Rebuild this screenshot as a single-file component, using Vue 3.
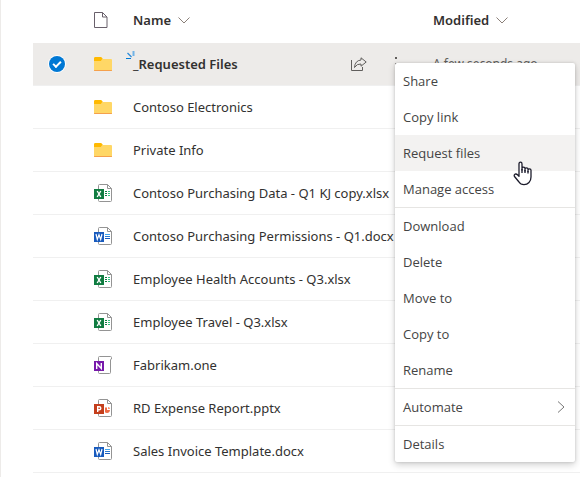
<script setup>
import { ref } from 'vue'

const files = ref([
  { name: '_Requested Files', type: 'folder', selected: true, isNew: true, modified: 'A few seconds ago' },
  { name: 'Contoso Electronics', type: 'folder' },
  { name: 'Private Info', type: 'folder' },
  { name: 'Contoso Purchasing Data - Q1 KJ copy.xlsx', type: 'excel' },
  { name: 'Contoso Purchasing Permissions - Q1.docx', type: 'word' },
  { name: 'Employee Health Accounts - Q3.xlsx', type: 'excel' },
  { name: 'Employee Travel - Q3.xlsx', type: 'excel' },
  { name: 'Fabrikam.one', type: 'onenote' },
  { name: 'RD Expense Report.pptx', type: 'powerpoint' },
  { name: 'Sales Invoice Template.docx', type: 'word' }
])

const menuGroups = [
  ['Share', 'Copy link', 'Request files', 'Manage access'],
  ['Download', 'Delete', 'Move to', 'Copy to', 'Rename'],
  ['Automate'],
  ['Details']
]
const highlighted = ref('Request files')
</script>

<template>
  <main class="library">
    <table class="files">
      <colgroup>
        <col class="col-check" />
        <col class="col-icon" />
        <col class="col-name" />
        <col />
      </colgroup>
      <thead>
        <tr>
          <th></th>
          <th class="icon-cell">
            <svg class="doc" width="14" height="16" viewBox="0 0 14 16">
              <path d="M.5.5h8l4.500 4.500v10.500H.5z" fill="#fff" stroke="#69606b" />
              <path d="M8.500.5v4.500h4.500" fill="none" stroke="#69606b" />
            </svg>
          </th>
          <th>
            <button class="sort" type="button">Name
              <svg width="12" height="7" viewBox="0 0 12 7"><path d="M.5.5 6 6 11.500.5" /></svg>
            </button>
          </th>
          <th>
            <button class="sort" type="button">Modified
              <svg width="12" height="7" viewBox="0 0 12 7"><path d="M.5.5 6 6 11.500.5" /></svg>
            </button>
          </th>
        </tr>
      </thead>
      <tbody>
        <tr v-for="file in files" :key="file.name" :class="{ selected: file.selected }">
          <td class="check-cell">
            <input v-if="file.selected" v-model="file.selected" class="check" type="checkbox" :aria-label="file.name" />
          </td>
          <td class="icon-cell">
            <svg v-if="file.type === 'folder'" width="18" height="18" viewBox="0 0 18 18">
              <path d="M0 3.500Q0 2 1.500 2H7l2 2h8q1 0 1 1v11H0z" fill="#ffd766" />
              <path d="M0 3.500Q0 2 1.200 2H7l1.500 1.500L6.800 6H0z" fill="#ffb900" />
              <path d="M0 15h18v.3q0 .7-.7.700H.7Q0 16 0 15.300z" fill="#f5a04c" />
            </svg>
            <svg v-else width="18" height="18" viewBox="0 0 18 18">
              <path
                v-if="file.type === 'onenote'"
                d="M4.500 5V1.500q0-1 1-1h11q1 0 1 1v1.500q-1 0-1 1v12.500q0 1-1 1h-10q-1 0-1-1V14"
                fill="#fff" stroke="#949494"
              />
              <template v-else>
                <path d="M4.500 5V1.500q0-1 1-1H13.500l4 4V16.500q0 1-1 1h-11q-1 0-1-1V14" fill="#fff" stroke="#949494" />
                <path d="M13.500.5v4h4" fill="none" stroke="#949494" />
              </template>
              <g v-if="file.type === 'excel'">
                <rect y="5" width="10" height="10" fill="#107c41" />
                <path d="m3.200 7 3.600 6M6.800 7l-3.600 6" stroke="#fff" stroke-width="1.400" />
                <path d="M11 7.500h2M11 9.500h2M11 11.500h2" stroke="#107c41" />
                <path d="M14 7.500h2M14 9.500h2M14 11.500h2" stroke="#33c481" />
              </g>
              <g v-if="file.type === 'word'">
                <rect y="5" width="10" height="10" fill="#185abd" />
                <path d="m2 7 1.300 5.500L5 7.800l1.700 4.700L8 7" fill="none" stroke="#fff" stroke-width="1.200" />
                <path d="M11 7.500h5" stroke="#41a5ee" />
                <path d="M11 9.500h5" stroke="#2b7cd3" />
                <path d="M11 11.500h5" stroke="#185abd" />
              </g>
              <g v-if="file.type === 'onenote'">
                <rect y="5" width="10" height="10" fill="#7719aa" />
                <path d="M2.700 13V7.500l4.600 5V7" fill="none" stroke="#fff" stroke-width="1.400" />
              </g>
              <g v-if="file.type === 'powerpoint'">
                <rect y="5" width="10" height="10" fill="#c43e1c" />
                <path d="M3.700 13V7.700h1.500q1.600 0 1.600 1.500t-1.600 1.500H3.700" fill="none" stroke="#fff" stroke-width="1.400" />
                <path d="M11 8.500h2V11h3q-.3 3-3 3-1.300 0-2-.7z" fill="#ed6c47" />
                <path d="M14 8q2 .2 2 2h-2z" fill="#ff8f6b" />
              </g>
            </svg>
          </td>
          <td>
            <div class="name-cell">
              <span class="name">
                <svg v-if="file.isNew" class="glimmer" width="9" height="9" viewBox="0 0 9 9">
                  <path d="M0 7.500h5" stroke="#0078d4" />
                  <path d="m1.500 2 4 4" stroke="#2b8cda" stroke-width="1.200" />
                  <path d="M7.500 0v5" stroke="#71b3e6" stroke-width="2" />
                </svg>{{ file.name }}
              </span>
              <template v-if="file.selected">
                <button class="action" type="button" aria-label="Share">
                  <svg width="16" height="14" viewBox="0 0 16 14">
                    <path d="M.5 3v10.500h11V10" />
                    <path d="M10 .8 15.200 5 10 9.200V7Q6 6.500 3.500 10.500 4 3.500 10 3z" />
                  </svg>
                </button>
                <button class="action" type="button" aria-label="More actions">
                  <svg width="2" height="14" viewBox="0 0 2 14"><path class="dots" d="M0 0h2v2H0zM0 6h2v2H0zM0 12h2v2H0z" /></svg>
                </button>
              </template>
            </div>
          </td>
          <td class="modified">{{ file.modified }}</td>
        </tr>
      </tbody>
    </table>

    <div class="menu" role="menu">
      <div v-for="(group, i) in menuGroups" :key="i" class="group" role="group">
        <button
          v-for="item in group"
          :key="item"
          class="item"
          :class="{ active: item === highlighted }"
          type="button"
          role="menuitem"
          @mouseenter="highlighted = item"
        >
          {{ item }}
          <svg v-if="item === 'Automate'" width="8" height="12" viewBox="0 0 8 12"><path d="m1 .5 6 5.500-6 5.500" fill="none" stroke="#777" /></svg>
        </button>
      </div>
      <svg class="pointer" width="20" height="25" viewBox="0 0 20 25">
        <path
          d="M6 14V3q0-1.800 1.500-1.800T9 3v6V7.500q0-1.300 1.500-1.300T12 7.500V10 8q0-1.200 1.500-1.200T15 8v2.500V9q0-1.200 1.500-1.200T18 9.300V16q0 3.500-2 5.500-2 2.200-5 2.200-3.500 0-5-2.700L1.500 15.500Q.7 14 2 13.200q1.300-.6 2.500.5L6 15.200z"
          fill="#fff" stroke="#1b1b2b" stroke-width="1.300" stroke-linejoin="round"
        />
        <path d="M9 8v4M12 9v3M15 10v2.500" stroke="#1b1b2b" stroke-width="1.300" />
      </svg>
    </div>
  </main>
</template>

<style>
body {
  margin: 0;
  background: #fff;
}
</style>

<style scoped>
.library {
  position: relative;
  box-sizing: border-box;
  min-height: 100vh;
  padding-left: 32px;
  border-left: 1px solid #edebe9;
  overflow: hidden;
  font: 13px/20px "Noto Sans", "Open Sans", sans-serif;
  color: #323130;
}
button {
  padding: 0;
  border: 0;
  background: none;
  font: inherit;
  color: inherit;
}
svg {
  display: block;
  flex: none;
}
.files {
  width: 100%;
  table-layout: fixed;
  border-collapse: separate;
  border-spacing: 0;
}
.col-check { width: 48px; }
.col-icon { width: 44px; }
.col-name { width: 300px; }
th,
td {
  box-sizing: border-box;
  height: 43px;
  padding: 0 8px;
  text-align: left;
  vertical-align: middle;
  white-space: nowrap;
}
th {
  padding-bottom: 3px;
}
td {
  border-bottom: 1px solid #f0f0f0;
}
.icon-cell {
  padding-left: 13px;
}
.check-cell {
  padding: 0 16px;
}
.modified {
  font-size: 12px;
  color: #605e5c;
}
.sort {
  display: flex;
  align-items: center;
  gap: 7px;
  font-weight: 600;
}
.sort path {
  fill: none;
  stroke: #8a7f78;
}
.selected td {
  background: #edebe9;
}
.selected .name {
  font-weight: 600;
}
.check {
  display: grid;
  place-items: center;
  appearance: none;
  width: 16px;
  height: 16px;
  margin: 0;
  border-radius: 50%;
  background: #0078d4;
  box-shadow: 0 0 0 1px #fff;
}
.check::before {
  content: "";
  width: 6px;
  height: 3px;
  margin-bottom: 2px;
  border: solid #fff;
  border-width: 0 0 2px 2px;
  transform: rotate(-45deg);
}
.name-cell {
  display: flex;
  align-items: center;
  gap: 28px;
  padding-right: 20px;
}
.name {
  position: relative;
  flex: 1;
}
.glimmer {
  position: absolute;
  left: -7px;
  top: -3px;
}
.action path {
  fill: none;
  stroke: #605e5c;
}
.action .dots {
  fill: #605e5c;
  stroke: none;
}
.menu {
  position: absolute;
  top: 63px;
  right: 5px;
  width: 180px;
  border-radius: 2px;
  background: #fff;
  box-shadow: 0 3px 7px rgba(0, 0, 0, 0.18), 0 0 3px rgba(0, 0, 0, 0.16);
}
.group + .group {
  border-top: 1px solid #e6e5e3;
}
.item {
  display: flex;
  align-items: center;
  justify-content: space-between;
  width: 100%;
  height: 36px;
  padding: 0 10px 0 8px;
  font-family: "Open Sans", "Noto Sans", sans-serif;
  color: #444;
}
.item.active {
  background: #f3f2f1;
}
.pointer {
  position: absolute;
  top: 98px;
  left: 118px;
}
</style>
